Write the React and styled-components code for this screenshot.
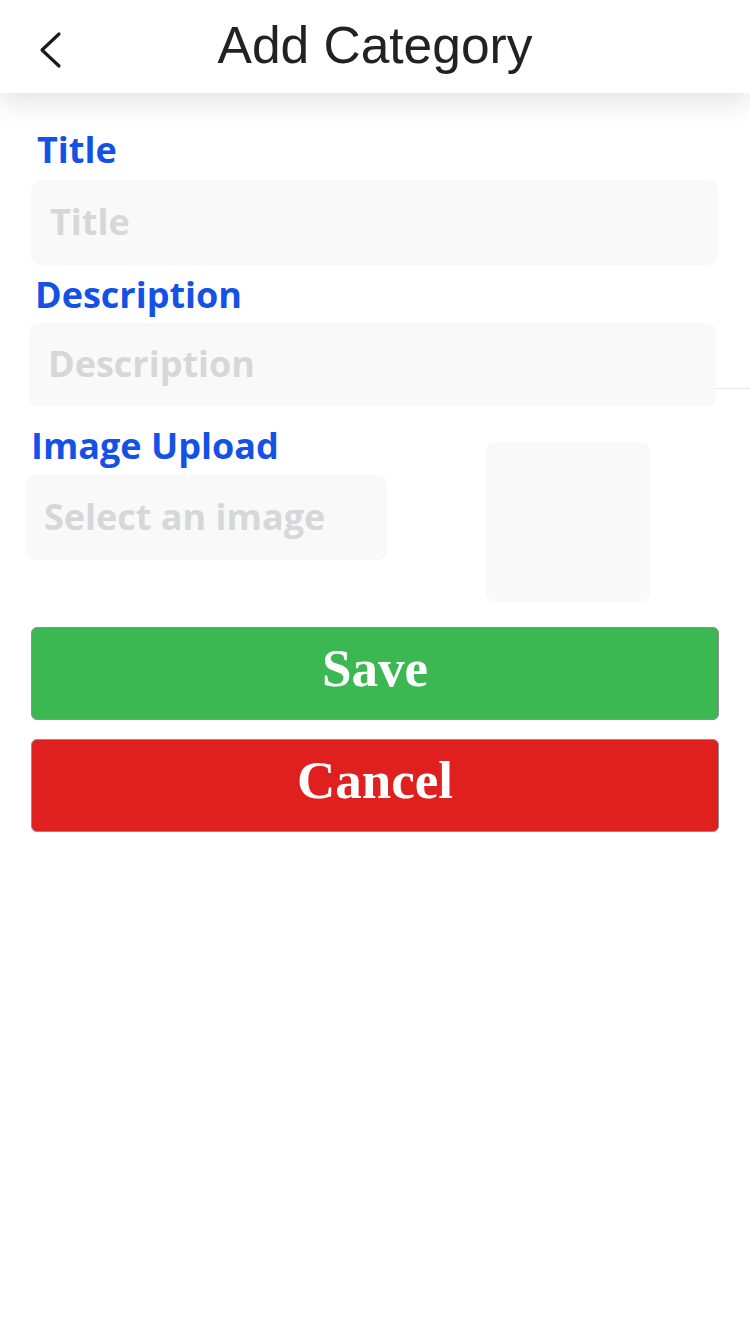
import React from "react";
import styled, { createGlobalStyle } from "styled-components";

const GlobalStyle = createGlobalStyle`
    * { box-sizing: border-box; }
    body {
        margin: 0;
        background: #ffffff;
        font-family: "Open Sans", "Noto Sans", sans-serif;
    }
`;

const Page = styled.div`
    width: 750px;
    min-height: 1334px;
    background: #ffffff;
`;

// top bar with back arrow and centered title
const Header = styled.header`
    position: relative;
    z-index: 2;
    height: 93px;
    display: grid;
    grid-template-columns: 1fr auto 1fr;
    align-items: center;
    background: #ffffff;
    box-shadow: 0 10px 26px rgba(0, 0, 0, 0.11);
`;

const BackButton = styled.button`
    justify-self: start;
    align-self: start;
    margin: 30px 0 0 38px;
    padding: 0;
    border: none;
    background: none;
    display: flex;
`;

const HeaderTitle = styled.h1`
    margin: 0;
    padding-bottom: 4px;
    font-family: "Liberation Sans", Arial, sans-serif;
    font-weight: 400;
    font-size: 51.5px;
    color: #222222;
`;

const Form = styled.form`
    padding-top: 39px;
    display: flex;
    flex-direction: column;
`;

const Field = styled.div`
    margin-left: ${({ offset }) => offset}px;
    margin-top: ${({ top }) => top || 0}px;
    display: flex;
    flex-direction: column;
    gap: ${({ gap }) => gap}px;
`;

// description row carries a hairline that runs off to the right edge
const LinedField = styled(Field)`
    border-bottom: 1px solid #e6e6e6;
`;

const Label = styled.label`
    padding-left: 6px;
    font-size: 36px;
    line-height: 1;
    font-weight: 700;
    color: #1452e6;
`;

const TextInput = styled.input`
    width: ${({ width }) => width}px;
    height: ${({ height }) => height || 85}px;
    margin-bottom: ${({ overhang }) => (overhang ? -overhang : 0)}px;
    padding: 0 0 3px 19px;
    border: none;
    border-radius: 9px;
    background: #f9f9f9;
    font-family: "Open Sans", "Noto Sans", sans-serif;
    font-size: 36px;
    font-weight: 700;
    color: #333333;
    outline: none;

    &::placeholder {
        color: #d7d7d7;
        opacity: 1;
    }
`;

const UploadRow = styled.div`
    display: flex;
    align-items: flex-start;
    margin-top: 39px;
`;

const Preview = styled.div`
    width: 164px;
    height: 160px;
    margin: 14px 0 0 99px;
    border-radius: 9px;
    background: #f9f9f9;
`;

const Actions = styled.div`
    margin: 25px 0 0 31px;
    display: flex;
    flex-direction: column;
    gap: 19px;
`;

const ActionButton = styled.button`
    width: 688px;
    height: 93px;
    padding: 0 0 12px;
    border: 1px solid #8e8e8e;
    border-radius: 6px;
    background: ${({ tone }) => (tone === "danger" ? "#e01f1f" : "#3bb852")};
    color: #ffffff;
    font-family: "Liberation Serif", "Times New Roman", serif;
    font-size: 53px;
    font-weight: 700;
`;

function BackIcon() {
    return (
        <svg width="26" height="40" viewBox="0 0 26 40" fill="none">
            <polyline
                points="21,4 4,20 21,36"
                stroke="#1a1a1a"
                strokeWidth="3.2"
                strokeLinecap="round"
                strokeLinejoin="round"
            />
        </svg>
    );
}

export default function App() {
    return (
        <Page>
            <GlobalStyle />
            <Header>
                <BackButton type="button" aria-label="Back">
                    <BackIcon />
                </BackButton>
                <HeaderTitle>Add Category</HeaderTitle>
                <div />
            </Header>

            <Form onSubmit={(e) => e.preventDefault()}>
                <Field offset={31} gap={12}>
                    <Label>Title</Label>
                    <TextInput width={687} placeholder="Title" />
                </Field>

                <LinedField offset={29} top={12} gap={10}>
                    <Label>Description</Label>
                    <TextInput width={687} height={84} overhang={19} placeholder="Description" />
                </LinedField>

                <UploadRow>
                    <Field offset={25} gap={11}>
                        <Label>Image Upload</Label>
                        <TextInput width={362} placeholder="Select an image" />
                    </Field>
                    <Preview />
                </UploadRow>

                <Actions>
                    <ActionButton type="submit">Save</ActionButton>
                    <ActionButton type="button" tone="danger">Cancel</ActionButton>
                </Actions>
            </Form>
        </Page>
    );
}
